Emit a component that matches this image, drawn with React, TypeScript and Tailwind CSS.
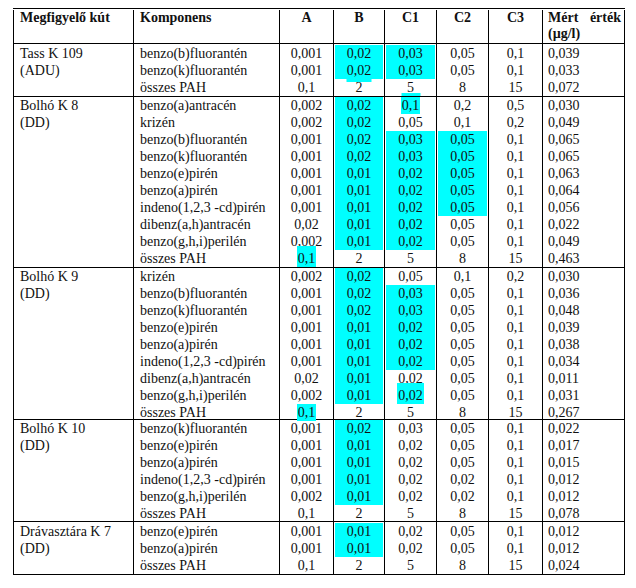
const CYAN = "bg-[#00ffff]";

const COLS = [
  "w-[120px]",
  "w-[146px]",
  "w-[54px]",
  "w-[51px]",
  "w-[52px]",
  "w-[52px]",
  "w-[54px]",
  "w-[83px] border-r",
];

// comp, A, B, C1, C2, C3, mért, highlight flags for A..C3
// 0 none, 1 cell block, 2 text only, 3 text only (taller), t strip on top, b strip at bottom
type Row = [string, string, string, string, string, string, string, string];

type Group = {
  label: string[];
  h: string;
  pad: string;
  rows: Row[];
};

const GROUPS: Group[] = [
  {
    label: ["Tass K 109", "(ADU)"],
    h: "h-[53px]",
    pad: "pt-[1px]",
    rows: [
      ["benzo(b)fluorantén", "0,001", "0,02", "0,03", "0,05", "0,1", "0,039", "01100"],
      ["benzo(k)fluorantén", "0,001", "0,02", "0,03", "0,05", "0,1", "0,033", "01100"],
      ["összes PAH", "0,1", "2", "5", "8", "15", "0,072", "0tb00"],
    ],
  },
  {
    label: ["Bolhó K 8", "(DD)"],
    h: "h-[171px]",
    pad: "",
    rows: [
      ["benzo(a)antracén", "0,002", "0,02", "0,1", "0,2", "0,5", "0,030", "01200"],
      ["krizén", "0,002", "0,02", "0,05", "0,1", "0,2", "0,049", "01000"],
      ["benzo(b)fluorantén", "0,001", "0,02", "0,03", "0,05", "0,1", "0,065", "01110"],
      ["benzo(k)fluorantén", "0,001", "0,02", "0,03", "0,05", "0,1", "0,065", "01110"],
      ["benzo(e)pirén", "0,001", "0,01", "0,02", "0,05", "0,1", "0,063", "01110"],
      ["benzo(a)pirén", "0,001", "0,01", "0,02", "0,05", "0,1", "0,064", "01110"],
      ["indeno(1,2,3 -cd)pirén", "0,001", "0,01", "0,02", "0,05", "0,1", "0,056", "01110"],
      ["dibenz(a,h)antracén", "0,02", "0,01", "0,02", "0,05", "0,1", "0,022", "01100"],
      ["benzo(g,h,i)perilén", "0,002", "0,01", "0,02", "0,05", "0,1", "0,049", "01100"],
      ["összes PAH", "0,1", "2", "5", "8", "15", "0,463", "30000"],
    ],
  },
  {
    label: ["Bolhó K 9", "(DD)"],
    h: "h-[152px]",
    pad: "",
    rows: [
      ["krizén", "0,002", "0,02", "0,05", "0,1", "0,2", "0,030", "01000"],
      ["benzo(b)fluorantén", "0,001", "0,02", "0,03", "0,05", "0,1", "0,036", "01100"],
      ["benzo(k)fluorantén", "0,001", "0,02", "0,03", "0,05", "0,1", "0,048", "01100"],
      ["benzo(e)pirén", "0,001", "0,01", "0,02", "0,05", "0,1", "0,039", "01100"],
      ["benzo(a)pirén", "0,001", "0,01", "0,02", "0,05", "0,1", "0,038", "01100"],
      ["indeno(1,2,3 -cd)pirén", "0,001", "0,01", "0,02", "0,05", "0,1", "0,034", "01100"],
      ["dibenz(a,h)antracén", "0,02", "0,01", "0,02", "0,05", "0,1", "0,011", "01000"],
      ["benzo(g,h,i)perilén", "0,002", "0,01", "0,02", "0,05", "0,1", "0,031", "01300"],
      ["összes PAH", "0,1", "2", "5", "8", "15", "0,267", "20000"],
    ],
  },
  {
    label: ["Bolhó K 10", "(DD)"],
    h: "h-[102px]",
    pad: "",
    rows: [
      ["benzo(k)fluorantén", "0,001", "0,02", "0,03", "0,05", "0,1", "0,022", "01000"],
      ["benzo(e)pirén", "0,001", "0,01", "0,02", "0,05", "0,1", "0,017", "01000"],
      ["benzo(a)pirén", "0,001", "0,01", "0,02", "0,05", "0,1", "0,015", "01000"],
      ["indeno(1,2,3 -cd)pirén", "0,001", "0,01", "0,02", "0,02", "0,1", "0,012", "01000"],
      ["benzo(g,h,i)perilén", "0,002", "0,01", "0,02", "0,02", "0,1", "0,012", "01000"],
      ["összes PAH", "0,1", "2", "5", "8", "15", "0,078", "00000"],
    ],
  },
  {
    label: ["Drávasztára K 7", "(DD)"],
    h: "h-[53px]",
    pad: "pt-[1px]",
    rows: [
      ["benzo(e)pirén", "0,001", "0,01", "0,02", "0,05", "0,1", "0,012", "01000"],
      ["benzo(a)pirén", "0,001", "0,01", "0,02", "0,05", "0,1", "0,012", "01000"],
      ["összes PAH", "0,1", "2", "5", "8", "15", "0,024", "00000"],
    ],
  },
];

function ValueLine({ text, flag }: { text: string; flag: string }) {
  return (
    <div className="relative flex-1 px-[1px]">
      {flag === "t" && <div className="absolute top-0 left-1/2 h-[3px] w-[25px] -translate-x-1/2 bg-[#00ffff]" />}
      {flag === "b" && <div className="absolute bottom-0 left-1/2 h-[3px] w-[19px] -translate-x-1/2 bg-[#00ffff]" />}
      <div className={`flex h-full items-center justify-center ${flag === "1" ? CYAN : ""}`}>
        {flag === "2" ? (
          <span className={`${CYAN} inline-block px-[1px]`}>{text}</span>
        ) : flag === "3" ? (
          <span className={`${CYAN} -mt-[4px] inline-block px-[1px] pt-[4px]`}>{text}</span>
        ) : (
          <span>{text}</span>
        )}
      </div>
    </div>
  );
}

function GroupRow({ g }: { g: Group }) {
  const cell = (i: number) => `${COLS[i]} flex flex-col border-l border-black ${g.pad}`;
  return (
    <div className={`flex border-t border-black ${g.h}`}>
      <div className={cell(0)}>
        {g.rows.map((_, r) => (
          <div key={r} className="flex flex-1 items-center pl-[6px] whitespace-nowrap">
            {g.label[r] ?? ""}
          </div>
        ))}
      </div>
      <div className={cell(1)}>
        {g.rows.map((row, r) => (
          <div key={r} className="flex flex-1 items-center pl-[6px] whitespace-nowrap">
            {row[0]}
          </div>
        ))}
      </div>
      {[1, 2, 3, 4, 5].map((c) => (
        <div key={c} className={cell(c + 1)}>
          {g.rows.map((row, r) => (
            <ValueLine key={r} text={row[c]} flag={row[7][c - 1]} />
          ))}
        </div>
      ))}
      <div className={cell(7)}>
        {g.rows.map((row, r) => (
          <div key={r} className="flex flex-1 items-center pl-[5px]">
            {row[6]}
          </div>
        ))}
      </div>
    </div>
  );
}

export default function App() {
  return (
    <div className="min-h-screen bg-white pt-[8px] pl-[13px]">
      <div className="w-[612px] border-y border-black font-['Liberation_Serif'] text-[14px] leading-[17px] text-[#111]">
        <div className="flex h-[34px] pt-[1px] font-bold leading-[16px]">
          <div className={`${COLS[0]} border-l border-black pl-[6px]`}>Megfigyelő kút</div>
          <div className={`${COLS[1]} border-l border-black pl-[6px]`}>Komponens</div>
          {["A", "B", "C1", "C2", "C3"].map((h, i) => (
            <div key={h} className={`${COLS[i + 2]} border-l border-black text-center`}>
              {h}
            </div>
          ))}
          <div className={`${COLS[7]} border-l border-black pr-[3px] pl-[5px]`}>
            <div className="flex justify-between">
              <span>Mért</span>
              <span>érték</span>
            </div>
            <div>(µg/l)</div>
          </div>
        </div>
        {GROUPS.map((g) => (
          <GroupRow key={g.label[0]} g={g} />
        ))}
      </div>
    </div>
  );
}
